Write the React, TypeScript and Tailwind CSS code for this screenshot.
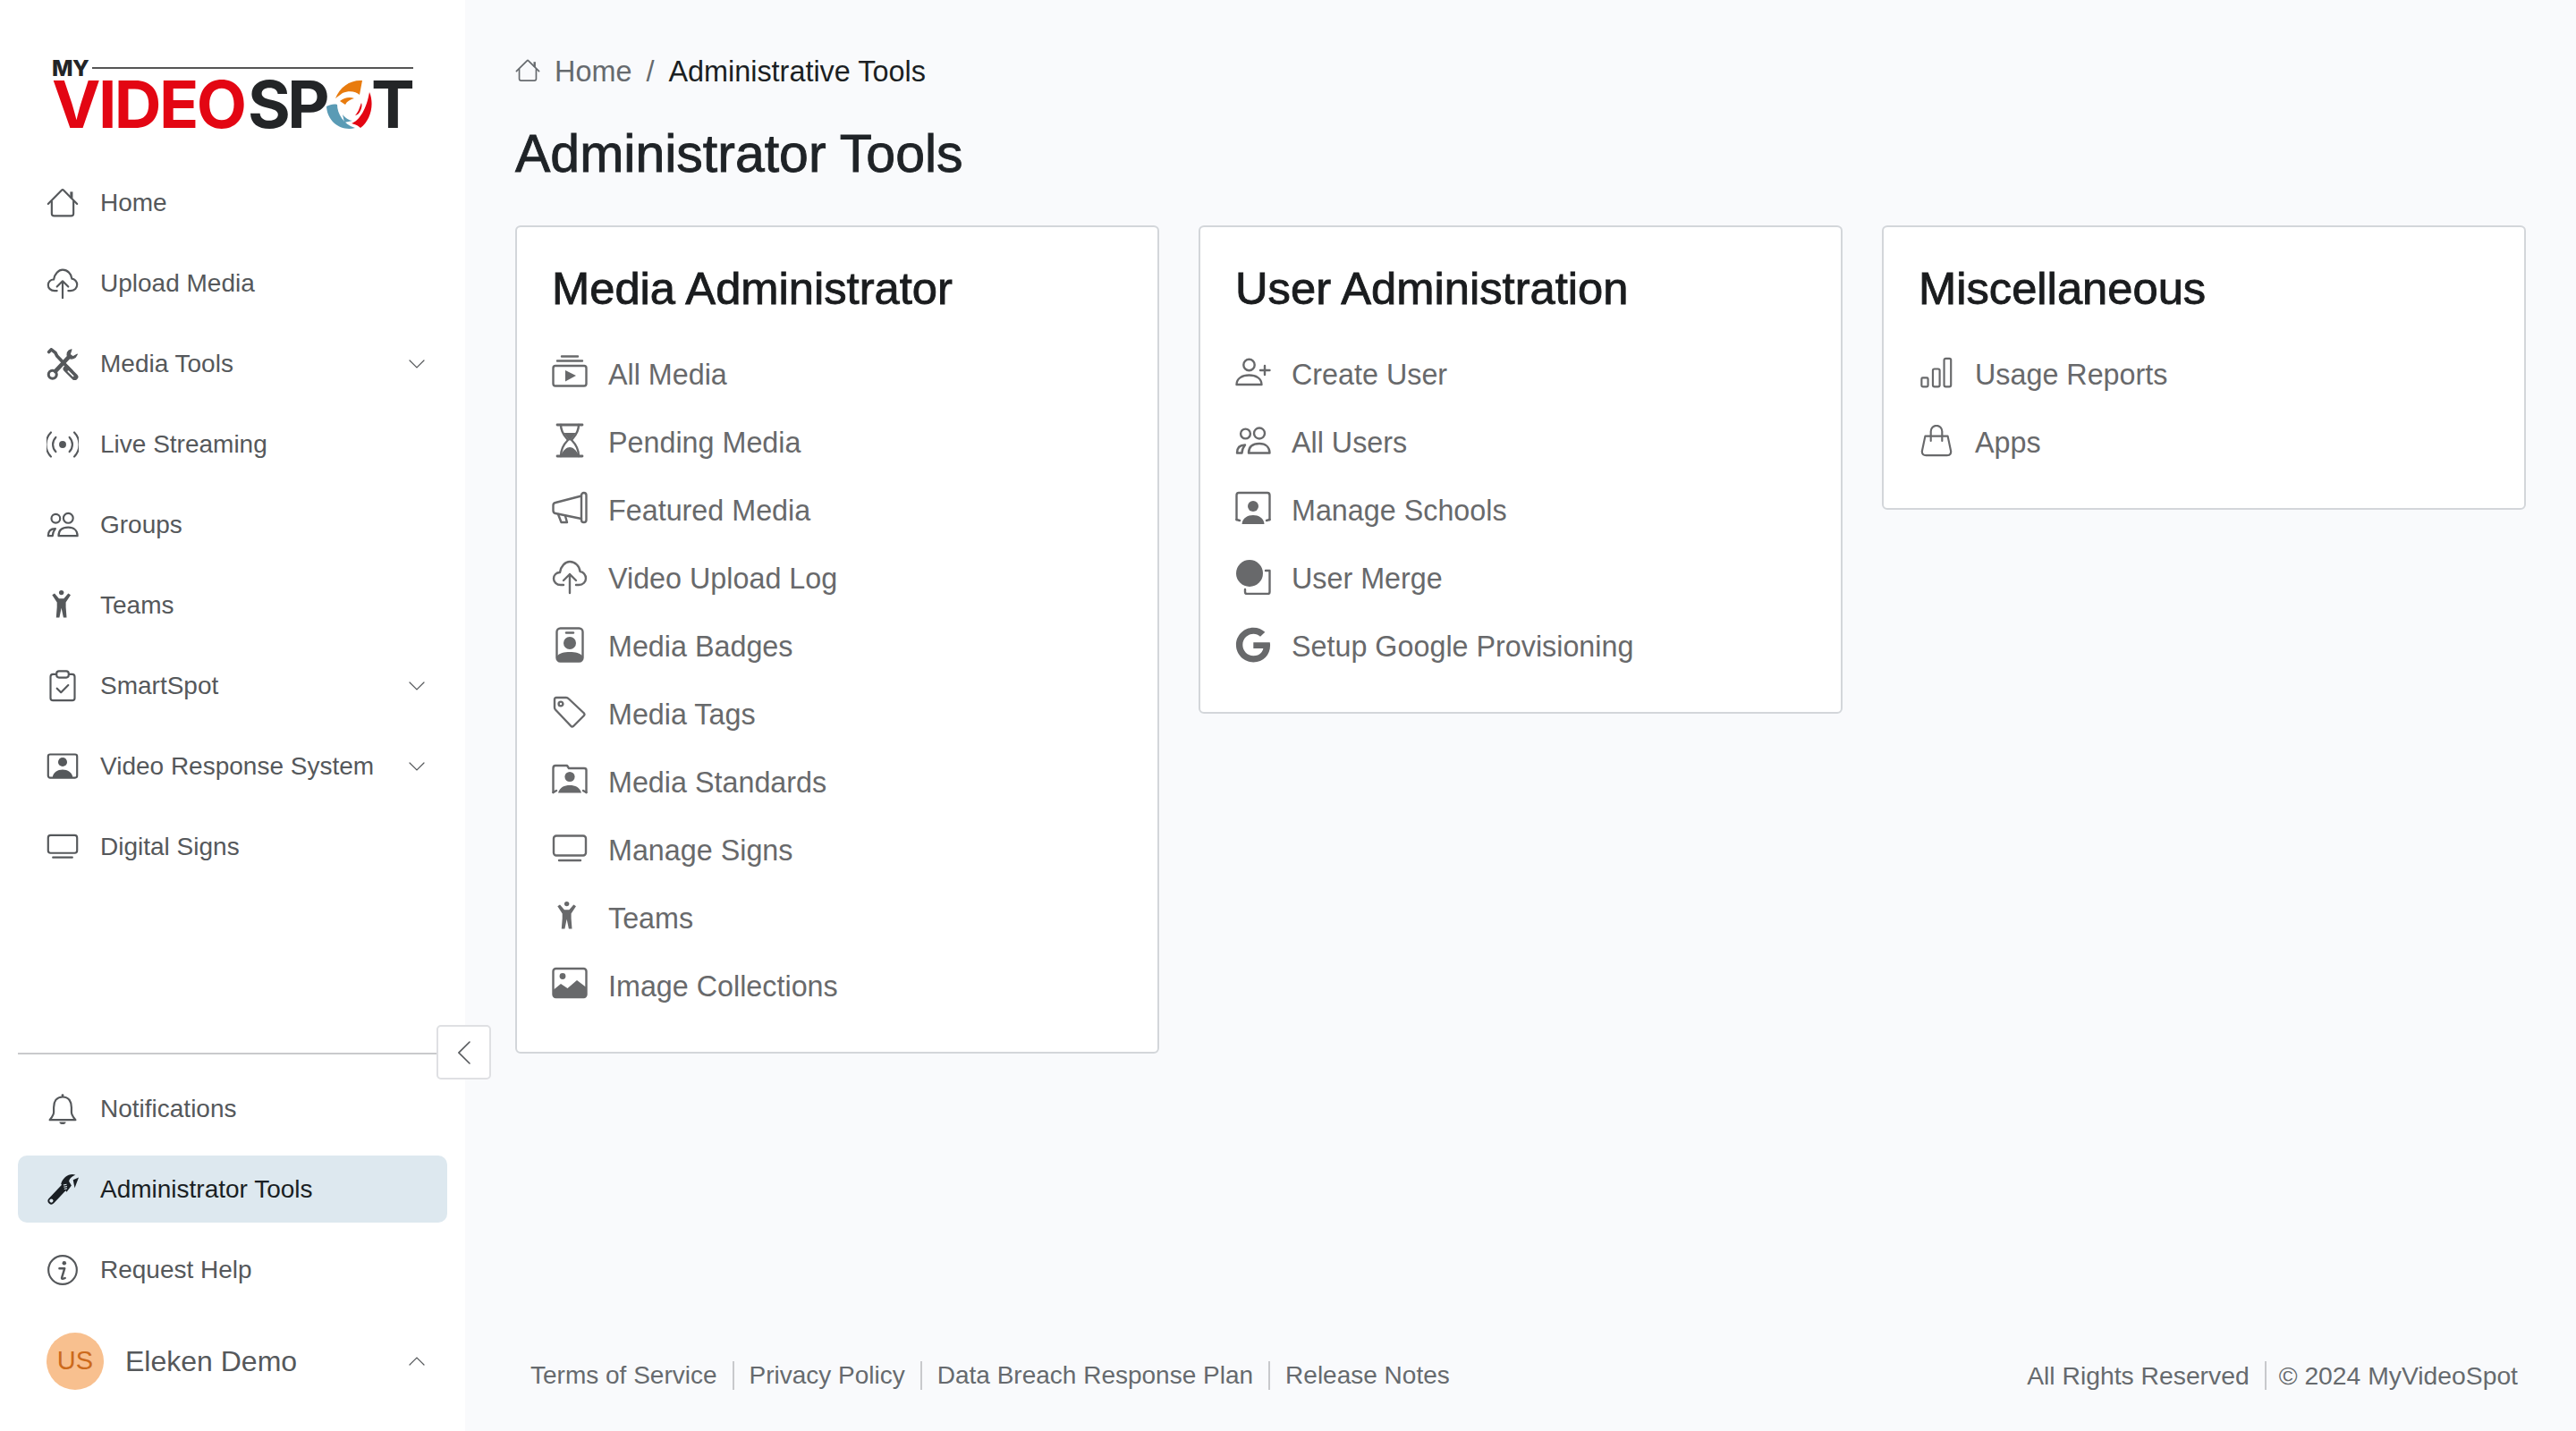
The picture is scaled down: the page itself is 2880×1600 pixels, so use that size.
import React from "react";
import { FaGoogle } from "react-icons/fa";

type IP = { className?: string };
const S = ({ className, children }: IP & { children: React.ReactNode }) => (
  <svg viewBox="0 0 40 40" fill="none" stroke="currentColor" strokeWidth={2.4} strokeLinecap="round" strokeLinejoin="round" className={className}>
    {children}
  </svg>
);
const Home = (p: IP) => (
  <S {...p}>
    <path d="M2 21 L19 4 Q20 3 21 4 L38 21" />
    <path d="M31 6 V14" strokeWidth={3.4} strokeLinecap="butt" />
    <path d="M6.5 18 V33 a3 3 0 0 0 3 3 H30.5 a3 3 0 0 0 3-3 V18" />
  </S>
);
const Cloud = (p: IP) => (
  <S {...p}>
    <path d="M13 29 H10 C5 29 2 25.5 2 22 C2 18 5 15 9 15 C10 8 15 3 20 3 C26 3 31 8 31.5 14 C35 14 38 18 38 21.5 C38 25.5 35 29 30 29 H27" />
    <path d="M20 38 V17 M13 24 L20 17 L27 24" />
  </S>
);
const Tools = (p: IP) => (
  <S {...p}>
    <path d="M3 5 L6 2 L11 6 L13 10 L31 29" strokeWidth={4} />
    <path d="M25 26 L35 36" strokeWidth={8.5} />
    <path d="M27 29 L33 35" stroke="#fff" strokeWidth={1.8} />
    <path d="M11 29 L28 11" strokeWidth={5} />
    <circle cx="7.5" cy="33" r="5" strokeWidth={3.4} />
    <path d="M31 2 C26 3 24 8 27 12 C31 15 36 13 38 8 L33 11 L29 8 Z" fill="currentColor" strokeWidth={1.4} />
  </S>
);
const Live = (p: IP) => (
  <S {...p}>
    <circle cx="20" cy="20" r="4.4" fill="currentColor" stroke="none" />
    <path d="M11.5 11 a13 13 0 0 0 0 18 M28.5 11 a13 13 0 0 1 0 18" />
    <path d="M5.5 5 a21.5 21.5 0 0 0 0 30 M34.5 5 a21.5 21.5 0 0 1 0 30" />
  </S>
);
const Groups = (p: IP) => (
  <S {...p}>
    <circle cx="11.5" cy="12" r="5.4" />
    <circle cx="27" cy="11.5" r="6" />
    <path d="M15 33.5 C15 26 20 23 27 23 C34 23 38.5 27 38.5 33.5 Z" />
    <path d="M2 33.5 C2 28 5 24.5 11 24.5 C9 27 7.5 30 7.5 33.5 Z" />
  </S>
);
const Person = (p: IP) => (
  <svg viewBox="0 0 40 40" fill="currentColor" className={p.className}>
    <circle cx="18.5" cy="4" r="3" />
    <path d="M7 7 L10 5 L15.5 11.5 H21.5 L27 5 L30 7 L24 16 V22 L25 35 H21 L18.5 23 L16 35 H12 L13 22 V16 Z" />
  </svg>
);
const Clip = (p: IP) => (
  <S {...p}>
    <path d="M12 5.5 H8 a3 3 0 0 0-3 3 V35 a3 3 0 0 0 3 3 H32 a3 3 0 0 0 3-3 V8.5 a3 3 0 0 0-3-3 H28" />
    <rect x="12.5" y="1.5" width="15" height="8" rx="3" />
    <path d="M13 23 L18 28 L27 19" />
  </S>
);
const Frame = (p: IP) => (
  <S {...p}>
    <rect x="2" y="5" width="36" height="29" rx="2.5" />
    <circle cx="20" cy="14.5" r="5.6" fill="currentColor" stroke="none" />
    <path d="M7.5 34 C8 27 14 24 20 24 C26 24 32 27 32.5 34 Z" fill="currentColor" stroke="none" />
  </S>
);
const Screen = (p: IP) => (
  <S {...p}>
    <rect x="2" y="5.5" width="36" height="22" rx="3" />
    <path d="M8 33 H32" />
  </S>
);
const Bell = (p: IP) => (
  <S {...p}>
    <path d="M20 5 C12 5 9 11 9 18 V24 C9 28 6 31 4 33.5 H36 C34 31 31 28 31 24 V18 C31 11 28 5 20 5 Z" />
    <circle cx="20" cy="3" r="1.6" fill="currentColor" stroke="none" />
    <path d="M16 36 H24 C24 40 16 40 16 36 Z" fill="currentColor" stroke="none" />
  </S>
);
const Wrench = (p: IP) => (
  <svg viewBox="0 0 40 40" className={p.className}>
    <path d="M6 34 L22 17" stroke="currentColor" strokeWidth={8.5} strokeLinecap="round" fill="none" />
    <path d="M18 13 C20 5 29 -1 36 2 C32 3 28 7 28 10 L31 15 L25 23 Z" fill="currentColor" />
    <path d="M33 8 L40 5 L35 18 Z" fill="currentColor" />
    <circle cx="6" cy="34" r="2.3" fill="#dde8ef" />
    <path d="M21 14.5 L25 13.5 M21.5 17 L25.5 16 M22 19.5 L25.5 18.5" stroke="#dde8ef" strokeWidth={1.2} />
  </svg>
);
const Info = (p: IP) => (
  <S {...p}>
    <circle cx="20" cy="20" r="17.6" />
    <circle cx="22" cy="11.5" r="2.5" fill="currentColor" stroke="none" />
    <path d="M16 18 H22.5 L19 29.5 Q18.5 32 23 30" strokeWidth={2.7} />
  </S>
);
const AllMedia = (p: IP) => (
  <S {...p}>
    <path d="M11 1.5 H29 M6 6.5 H34" />
    <rect x="1.5" y="12" width="37" height="22.5" rx="2.5" />
    <path d="M15 17 L27 23 L15 29.5 Z" fill="currentColor" stroke="none" />
  </S>
);
const Hourglass = (p: IP) => (
  <S {...p}>
    <path d="M6 2 H34 M6 37 H34" strokeWidth={2.8} />
    <path d="M10 2 C10 11 15 15 18 19 C15 22 10 28 10 37 M30 2 C30 11 25 15 22 19 C25 22 30 28 30 37" />
    <path d="M13 11 H27 L20 20 Z" fill="currentColor" stroke="none" />
    <path d="M10 37 C12 30 17 27 20 27 C23 27 28 30 30 37 Z" fill="currentColor" stroke="none" />
  </S>
);
const Mega = (p: IP) => (
  <S {...p}>
    <path d="M33 5.5 L4 13 Q1.5 13.5 1.5 16 V22 Q1.5 24.5 4 25 L33 31" />
    <rect x="33" y="2" width="5.5" height="33" rx="2.7" />
    <path d="M7 26 L10.5 35 H17 L15 28" />
  </S>
);
const Badge = (p: IP) => (
  <S {...p}>
    <rect x="5.5" y="1.5" width="29" height="37" rx="4" />
    <path d="M16 6.5 H24" />
    <circle cx="20" cy="18" r="7" fill="currentColor" stroke="none" />
    <path d="M5.5 33 C8 29 14 28 20 28 C26 28 32 29 34.5 33 V35 a3.5 3.5 0 0 1-3.5 3.5 H9 a3.5 3.5 0 0 1-3.5-3.5 Z" fill="currentColor" stroke="none" />
  </S>
);
const Tag = (p: IP) => (
  <S {...p}>
    <path d="M5 3 H16 Q17.5 3 19 4.5 L36 20.5 Q37 22 36 23 L24 35 Q22.5 36 21.5 35 L4 16.5 Q3 15.5 3 14 V5 Q3 3 5 3 Z" />
    <circle cx="10" cy="10" r="2.4" />
  </S>
);
const Standards = (p: IP) => (
  <S {...p}>
    <path d="M1.5 33 V6 Q1.5 3 4 3 H17 L19 6 H36 Q38.5 6 38.5 8 V33" />
    <path d="M1.5 33 L5 31 M38.5 33 L35 31" />
    <circle cx="20" cy="15.5" r="5.6" fill="currentColor" stroke="none" />
    <path d="M7 33.5 C9 27 14 25 20 25 C26 25 31 27 33 33.5 Z" fill="currentColor" stroke="none" />
  </S>
);
const Image = (p: IP) => (
  <S {...p}>
    <rect x="1.5" y="2" width="37" height="32" rx="3" />
    <circle cx="12" cy="10.5" r="3.4" fill="currentColor" stroke="none" />
    <path d="M1.5 26 L10 19 L17.5 24 L28 15 L38.5 23 V31 a3 3 0 0 1-3 3 H4.5 a3 3 0 0 1-3-3 Z" fill="currentColor" stroke="none" />
  </S>
);
const AddUser = (p: IP) => (
  <S {...p}>
    <circle cx="15.5" cy="11" r="6.2" />
    <path d="M1.5 33 C1.5 26 8 22.5 15.5 22.5 C23 22.5 29.5 26 29.5 33 Z" />
    <path d="M33 12 V22 M28 17 H38.5" />
  </S>
);
const Schools = (p: IP) => (
  <S {...p}>
    <path d="M1.5 32 V5 Q1.5 2 4 2 H36 Q38.5 2 38.5 5 V32" />
    <path d="M1.5 32 L5 33 M38.5 32 L35 33" />
    <circle cx="20" cy="17" r="6" fill="currentColor" stroke="none" />
    <path d="M7.5 37 C8 30 14 27 20 27 C26 27 32 30 32.5 37 Z" fill="currentColor" stroke="none" />
  </S>
);
const Merge = (p: IP) => (
  <S {...p}>
    <circle cx="16" cy="16" r="15" fill="currentColor" stroke="none" />
    <path d="M34 13 H38.5 V37 a2 2 0 0 1-2 2 H13 a2 2 0 0 1-2-2 V34" />
  </S>
);
const Bars = (p: IP) => (
  <S {...p}>
    <rect x="1.5" y="26" width="8" height="11" rx="1.5" />
    <rect x="15.5" y="15" width="8.5" height="22" rx="2" />
    <rect x="29.5" y="2" width="8.5" height="35" rx="2" />
  </S>
);
const Bag = (p: IP) => (
  <S {...p}>
    <path d="M6 14 H34 L38 33 Q38 38 33 38 H7 Q2 38 2 33 Z" />
    <path d="M13 20 V8 a7 7 0 0 1 14 0 V20" />
  </S>
);
const Chevron = ({ up }: { up?: boolean }) => (
  <svg viewBox="0 0 18 10" className="w-[18px] h-[10px] text-[#55585b]" fill="none" stroke="currentColor" strokeWidth={1.2} strokeLinecap="round">
    <path d={up ? "M1 9 L9 1 L17 9" : "M1 1 L9 9 L17 1"} />
  </svg>
);

const Row = ({ icon: I, label, chev, active }: { icon: React.FC<IP>; label: string; chev?: boolean; active?: boolean }) => (
  <div className={`flex items-center h-[75px] pl-8 pr-[25px] rounded-[10px] ${active ? "bg-[#dde8ef] text-[#1a1f24]" : "text-[#55585b]"}`}>
    <I className="w-9 h-9 shrink-0" />
    <span className="ml-[24px] text-[28px] flex-1 whitespace-nowrap">{label}</span>
    {chev && <Chevron />}
  </div>
);

const Logo = () => (
  <div className="ml-[58px] mt-[67px] w-[404px] font-['Inter'] font-bold">
    <div className="flex items-center h-[18px] gap-1">
      <span className="text-[25px] leading-[18px] font-extrabold text-[#232527] tracking-[-0.5px]">MY</span>
      <div className="flex-1 h-[2px] bg-[#555]" />
    </div>
    <div className="flex items-center h-[53px] mt-[5px] text-[73px] leading-[53px] tracking-[-3.6px]">
      <span className="text-[#e30613] w-[219px] shrink-0 tracking-[-2.6px]">VIDEO</span>
      <span className="text-[#232527] w-[88px] shrink-0">SP</span>
      <svg viewBox="0 0 54 56" className="w-[54px] h-14 shrink-0 -ml-[1px]">
        <path d="M11 21 C16 8 28 0 41 1 L38 17 C34 13 26 12 19 15 Z" fill="#e87b0e" />
        <path d="M16 24 C21 20 27 19 32 21 C28 22 24 24 22 28 Z" fill="#e87b0e" />
        <path d="M1 30 C5 28 9 27 13 28 C13 38 20 50 33 54 C18 58 2 48 1 30 Z" fill="#5a9bb5" />
        <path d="M19 39 C22 43 27 46 30 46 L21 48 Z" fill="#5a9bb5" />
        <path d="M49 14 C55 28 50 46 39 54 C35 50 32 50 29 49 C38 46 46 32 49 14 Z" fill="#e30613" />
        <path d="M40 26 C42 30 38 40 33 40 C37 36 38 31 40 26 Z" fill="#e30613" />
      </svg>
      <span className="text-[#232527] -ml-[3px]">T</span>
    </div>
  </div>
);

const Sidebar = () => (
  <aside className="relative w-[520px] h-[1600px] shrink-0 bg-white flex flex-col justify-between">
    <div>
      <Logo />
      <nav className="mt-[46px] px-5 flex flex-col gap-[15px]">
        <Row icon={Home} label="Home" />
        <Row icon={Cloud} label="Upload Media" />
        <Row icon={Tools} label="Media Tools" chev />
        <Row icon={Live} label="Live Streaming" />
        <Row icon={Groups} label="Groups" />
        <Row icon={Person} label="Teams" />
        <Row icon={Clip} label="SmartSpot" chev />
        <Row icon={Frame} label="Video Response System" chev />
        <Row icon={Screen} label="Digital Signs" />
      </nav>
    </div>
    <div className="relative pb-[41px]">
      <div className="mx-5 w-[470px] h-[2px] bg-[#c9cacc]" />
      <button className="absolute left-[488px] -top-[31px] w-[61px] h-[61px] flex items-center justify-center bg-white border-2 border-[#dfe0e3] rounded-[5px] text-[#55585b]">
        <svg viewBox="0 0 14 26" className="w-[14px] h-[26px]" fill="none" stroke="currentColor" strokeWidth={1.6} strokeLinecap="round">
          <path d="M13 1 L1 13 L13 25" />
        </svg>
      </button>
      <div className="mt-[23px] px-5 flex flex-col gap-[15px]">
        <Row icon={Bell} label="Notifications" />
        <Row icon={Wrench} label="Administrator Tools" active />
        <Row icon={Info} label="Request Help" />
        <div className="flex items-center h-[75px] pl-8 pr-[25px] mt-3 text-[#55585b]">
          <div className="w-16 h-16 rounded-full bg-[#f8c08f] text-[#cc6a1c] text-[29px] flex items-center justify-center shrink-0">US</div>
          <span className="ml-[24px] text-[32px] flex-1">Eleken Demo</span>
          <Chevron up />
        </div>
      </div>
    </div>
  </aside>
);

type Item = { icon: React.FC<IP>; label: string; size?: string };
const Card = ({ title, items }: { title: string; items: Item[] }) => (
  <section className="bg-white border-2 border-[#d3d6da] rounded-[6px] pt-[39px] pb-[35px] pl-[39px] pr-6 self-start">
    <h2 className="text-[50.7px] leading-[60px] text-[#1a1c1e] [-webkit-text-stroke:0.9px_#1a1c1e] mb-7">{title}</h2>
    <ul>
      {items.map((it) => (
        <li key={it.label} className="flex items-center h-[76px] text-[#68696b]">
          <span className="w-10 h-10 shrink-0 flex items-center justify-center -translate-y-[2px]">
            <it.icon className={it.size ?? "w-10 h-10"} />
          </span>
          <span className="ml-[23px] text-[32.3px] whitespace-nowrap">{it.label}</span>
        </li>
      ))}
    </ul>
  </section>
);

const FootLink = ({ children, first }: { children: React.ReactNode; first?: boolean }) => (
  <span className={`h-8 flex items-center px-[17px] whitespace-nowrap ${first ? "" : "border-l-2 border-[#c8c9cc]"}`}>{children}</span>
);

export default function App() {
  return (
    <div className="flex w-full min-h-[1600px] bg-[#f9fafc] font-['Liberation_Sans',Arial,sans-serif]">
      <Sidebar />
      <main className="flex-1 min-w-0 h-[1600px] flex flex-col px-14">
        <div className="flex items-center h-10 mt-[60px] text-[32.4px] text-[#666a6e]">
          <Home className="w-[28px] h-[28px] mr-[16px] -translate-y-[1px]" />
          <span>Home</span>
          <span className="mx-[16px]">/</span>
          <span className="text-[#1b1f23]">Administrative Tools</span>
        </div>
        <h1 className="mt-[38px] h-[68px] leading-[68px] text-[59px] text-[#1f2327] [-webkit-text-stroke:0.9px_#1f2327] mb-[46px]">Administrator Tools</h1>
        <div className="grid grid-cols-3 gap-11">
          <Card
            title="Media Administrator"
            items={[
              { icon: AllMedia, label: "All Media" },
              { icon: Hourglass, label: "Pending Media" },
              { icon: Mega, label: "Featured Media" },
              { icon: Cloud, label: "Video Upload Log" },
              { icon: Badge, label: "Media Badges" },
              { icon: Tag, label: "Media Tags" },
              { icon: Standards, label: "Media Standards" },
              { icon: Screen, label: "Manage Signs" },
              { icon: Person, label: "Teams", size: "w-9 h-9 -ml-[4px]" },
              { icon: Image, label: "Image Collections" },
            ]}
          />
          <Card
            title="User Administration"
            items={[
              { icon: AddUser, label: "Create User" },
              { icon: Groups, label: "All Users" },
              { icon: Schools, label: "Manage Schools" },
              { icon: Merge, label: "User Merge" },
              { icon: FaGoogle as unknown as React.FC<IP>, label: "Setup Google Provisioning" },
            ]}
          />
          <Card
            title="Miscellaneous"
            items={[
              { icon: Bars, label: "Usage Reports", size: "w-9 h-9" },
              { icon: Bag, label: "Apps", size: "w-9 h-9" },
            ]}
          />
        </div>
        <footer className="mt-auto mb-[46px] -mr-[8px] flex items-center justify-between text-[28px] text-[#666a6e]">
          <div className="flex items-center">
            <FootLink first>Terms of Service</FootLink>
            <FootLink>Privacy Policy</FootLink>
            <FootLink>Data Breach Response Plan</FootLink>
            <FootLink>Release Notes</FootLink>
          </div>
          <div className="flex items-center text-[28.3px]">
            <FootLink first>All Rights Reserved</FootLink>
            <span className="h-8 flex items-center pl-[14px] pr-[17px] whitespace-nowrap border-l-2 border-[#c8c9cc]">© 2024 MyVideoSpot</span>
          </div>
        </footer>
      </main>
    </div>
  );
}
